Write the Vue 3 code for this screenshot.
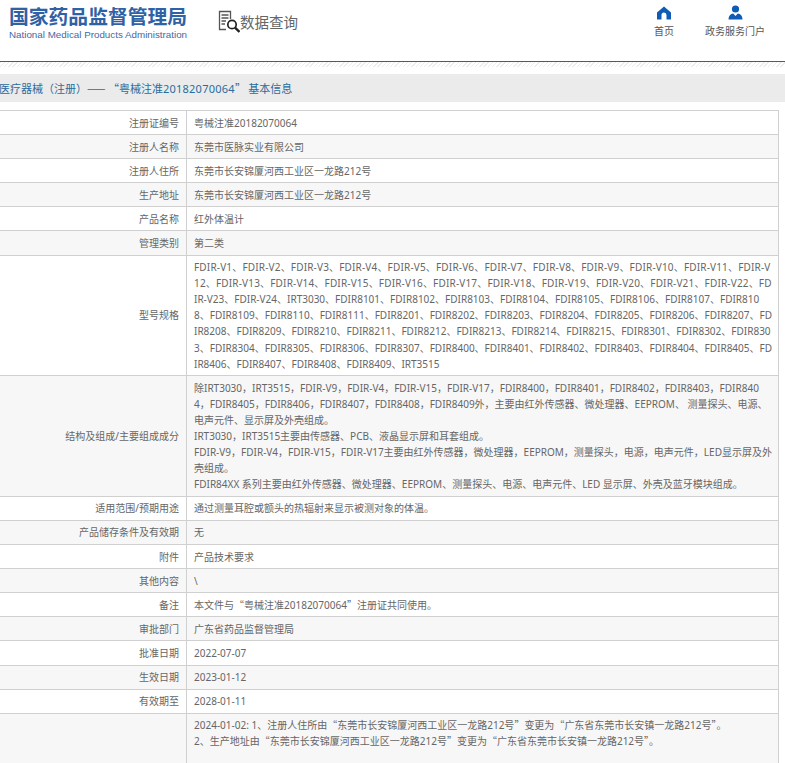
<template>
  <div class="page">
    <header class="top">
      <div class="logo">
        <div class="logo-cn">国家药品监督管理局</div>
        <div class="logo-en">National Medical Products Administration</div>
      </div>
      <div class="query">
        <svg class="query-icon" width="22" height="24" viewBox="0 0 22 24">
          <path d="M8 20.5H1.5V2.5H12.5V10" fill="none" stroke="#555" stroke-width="1.3" />
          <path d="M3.5 6H10.5M3.5 9H10.5M3.5 12H8M3.5 15H7" fill="none" stroke="#555" stroke-width="1.3" />
          <circle cx="14" cy="15.5" r="4.2" fill="none" stroke="#222" stroke-width="1.7" />
          <path d="M17 18.6L21.5 23" fill="none" stroke="#222" stroke-width="2.4" />
        </svg>
        <span>数据查询</span>
      </div>
      <nav class="nav">
        <a class="nav-item home">
          <svg width="14" height="14" viewBox="0 0 14 14">
            <path d="M7 0.5L14 6.5V13.5H9.5V9A2.5 2.5 0 0 0 4.5 9V13.5H0V6.5Z" fill="#0f5bb5" />
          </svg>
          <span>首页</span>
        </a>
        <a class="nav-item">
          <svg width="15" height="15" viewBox="0 0 15 15">
            <circle cx="7.5" cy="4" r="3.6" fill="#0f5bb5" />
            <path d="M0.5 14.5C0.5 11 2.5 9 5.2 8.6L7.5 11L9.8 8.6C12.5 9 14.5 11 14.5 14.5Z" fill="#0f5bb5" />
          </svg>
          <span>政务服务门户</span>
        </a>
      </nav>
    </header>
    <div class="hatch"></div>
    <div class="crumb">
      <span class="cjk">医疗器械（注册）—— “粤械注准</span><span class="num">20182070064</span><span class="cjk">” 基本信息</span>
    </div>
    <table class="info">
      <tbody>
        <tr v-for="(row, i) in rows" :key="i" :class="{ odd: i % 2 === 1 }">
          <th>{{ row.label }}</th>
          <td>
            <div v-for="(line, l) in row.lines" :key="l" :class="{ wide: l < row.wide }">
              <span v-for="(part, p) in split(line)" :key="p" :class="{ cjk: isQuote(part) }">{{ part }}</span>
            </div>
          </td>
        </tr>
      </tbody>
    </table>
  </div>
</template>

<script setup>
const models = [
  'FDIR-V1、FDIR-V2、FDIR-V3、FDIR-V4、FDIR-V5、FDIR-V6、FDIR-V7、FDIR-V8、FDIR-V9、FDIR-V10、FDIR-V11、FDIR-V',
  '12、FDIR-V13、FDIR-V14、FDIR-V15、FDIR-V16、FDIR-V17、FDIR-V18、FDIR-V19、FDIR-V20、FDIR-V21、FDIR-V22、FD',
  'IR-V23、FDIR-V24、IRT3030、FDIR8101、FDIR8102、FDIR8103、FDIR8104、FDIR8105、FDIR8106、FDIR8107、FDIR810',
  '8、FDIR8109、FDIR8110、FDIR8111、FDIR8201、FDIR8202、FDIR8203、FDIR8204、FDIR8205、FDIR8206、FDIR8207、FD',
  'IR8208、FDIR8209、FDIR8210、FDIR8211、FDIR8212、FDIR8213、FDIR8214、FDIR8215、FDIR8301、FDIR8302、FDIR830',
  '3、FDIR8304、FDIR8305、FDIR8306、FDIR8307、FDIR8400、FDIR8401、FDIR8402、FDIR8403、FDIR8404、FDIR8405、FD',
  'IR8406、FDIR8407、FDIR8408、FDIR8409、IRT3515'
]

const rows = [
  { label: '注册证编号', lines: ['粤械注准20182070064'] },
  { label: '注册人名称', lines: ['东莞市医脉实业有限公司'] },
  { label: '注册人住所', lines: ['东莞市长安锦厦河西工业区一龙路212号'] },
  { label: '生产地址', lines: ['东莞市长安锦厦河西工业区一龙路212号'] },
  { label: '产品名称', lines: ['红外体温计'] },
  { label: '管理类别', lines: ['第二类'] },
  { label: '型号规格', lines: models, wide: 2 },
  {
    label: '结构及组成/主要组成成分',
    lines: [
      '除IRT3030，IRT3515，FDIR-V9，FDIR-V4，FDIR-V15，FDIR-V17，FDIR8400，FDIR8401，FDIR8402，FDIR8403，FDIR8404，FDIR8405，FDIR8406，FDIR8407，FDIR8408，FDIR8409外，主要由红外传感器、微处理器、EEPROM、 测量探头、电源、电声元件、显示屏及外壳组成。',
      'IRT3030，IRT3515主要由传感器、PCB、液晶显示屏和耳套组成。',
      'FDIR-V9，FDIR-V4，FDIR-V15，FDIR-V17主要由红外传感器，微处理器，EEPROM，测量探头，电源，电声元件，LED显示屏及外壳组成。',
      'FDIR84XX 系列主要由红外传感器、微处理器、EEPROM、测量探头、电源、电声元件、LED 显示屏、外壳及蓝牙模块组成。'
    ]
  },
  { label: '适用范围/预期用途', lines: ['通过测量耳腔或额头的热辐射来显示被测对象的体温。'] },
  { label: '产品储存条件及有效期', lines: ['无'] },
  { label: '附件', lines: ['产品技术要求'] },
  { label: '其他内容', lines: ['\\'] },
  { label: '备注', lines: ['本文件与“粤械注准20182070064”注册证共同使用。'] },
  { label: '审批部门', lines: ['广东省药品监督管理局'] },
  { label: '批准日期', lines: ['2022-07-07'] },
  { label: '生效日期', lines: ['2023-01-12'] },
  { label: '有效期至', lines: ['2028-01-11'] },
  {
    label: '',
    lines: [
      '2024-01-02: 1、注册人住所由“东莞市长安锦厦河西工业区一龙路212号”变更为“广东省东莞市长安镇一龙路212号”。',
      '2、生产地址由“东莞市长安锦厦河西工业区一龙路212号”变更为“广东省东莞市长安镇一龙路212号”。'
    ]
  }
]

// quotes need the full-width CJK glyphs
function split(line) {
  return line.split(/(“|”)/).filter(Boolean)
}

function isQuote(part) {
  return part === '“' || part === '”'
}
</script>

<style>
html,
body {
  overflow: hidden;
  background: #fff;
}
</style>

<style scoped>
.page {
  height: 763px;
  overflow: hidden;
  font-family: "Noto Sans", "Noto Sans CJK SC", sans-serif;
  font-size: 10px;
  color: #666;
}
.cjk {
  font-family: "Noto Sans CJK SC", sans-serif;
}
.wide {
  letter-spacing: 0.17px;
}
.top {
  display: flex;
  height: 61px;
}
.logo {
  margin-left: 9px;
  padding-top: 4px;
  width: 179px;
}
.logo-cn {
  font-family: "Noto Sans CJK SC", sans-serif;
  font-size: 19.8px;
  line-height: 24px;
  font-weight: 700;
  color: #2f62a5;
  white-space: nowrap;
}
.logo-en {
  margin-top: 1px;
  font-family: "Liberation Sans", sans-serif;
  font-size: 9.8px;
  line-height: 12px;
  color: #3f6aa5;
  white-space: nowrap;
}
.query {
  display: flex;
  align-items: center;
  margin-left: 30px;
  height: 32px;
  margin-top: 5px;
  font-family: "Noto Sans CJK SC", sans-serif;
  font-size: 14.5px;
  color: #666;
}
.nav {
  display: flex;
  margin-left: auto;
  margin-right: 20px;
  gap: 31px;
  padding-top: 5px;
}
.nav-item {
  display: flex;
  flex-direction: column;
  align-items: center;
  font-family: "Noto Sans CJK SC", sans-serif;
  color: #555;
}
.nav-item.home {
  padding-top: 1px;
}
.nav-item span {
  margin-top: 4px;
  line-height: 14px;
}
.hatch {
  height: 12px;
  border-top: 1px solid #1f6a9c;
  background: repeating-linear-gradient(135deg, #ececec 0, #ececec 1px, #fff 1px, #fff 3px) top left / 100% 5px no-repeat;
}
.crumb {
  margin-left: -1px;
  height: 28px;
  line-height: 28px;
  background: #ebebeb;
  font-size: 11px;
  color: #2a6c9e;
  white-space: nowrap;
}
.num {
  letter-spacing: 0.25px;
}
.info {
  margin-top: 8px;
  margin-left: -30px;
  width: 809px;
  table-layout: fixed;
  border-collapse: collapse;
}
.info th,
.info td {
  border: 1px solid #d0d0d0;
  padding: 3.5px 7px;
  line-height: 16.1px;
  font-weight: 400;
  vertical-align: middle;
  word-break: break-all;
}
.info td {
  padding-right: 5px;
}
.info th {
  width: 201px;
  text-align: right;
}
.info tr.odd {
  background: #f7f7f7;
}
.info tr:last-child td {
  height: 90px;
  vertical-align: top;
}
</style>
